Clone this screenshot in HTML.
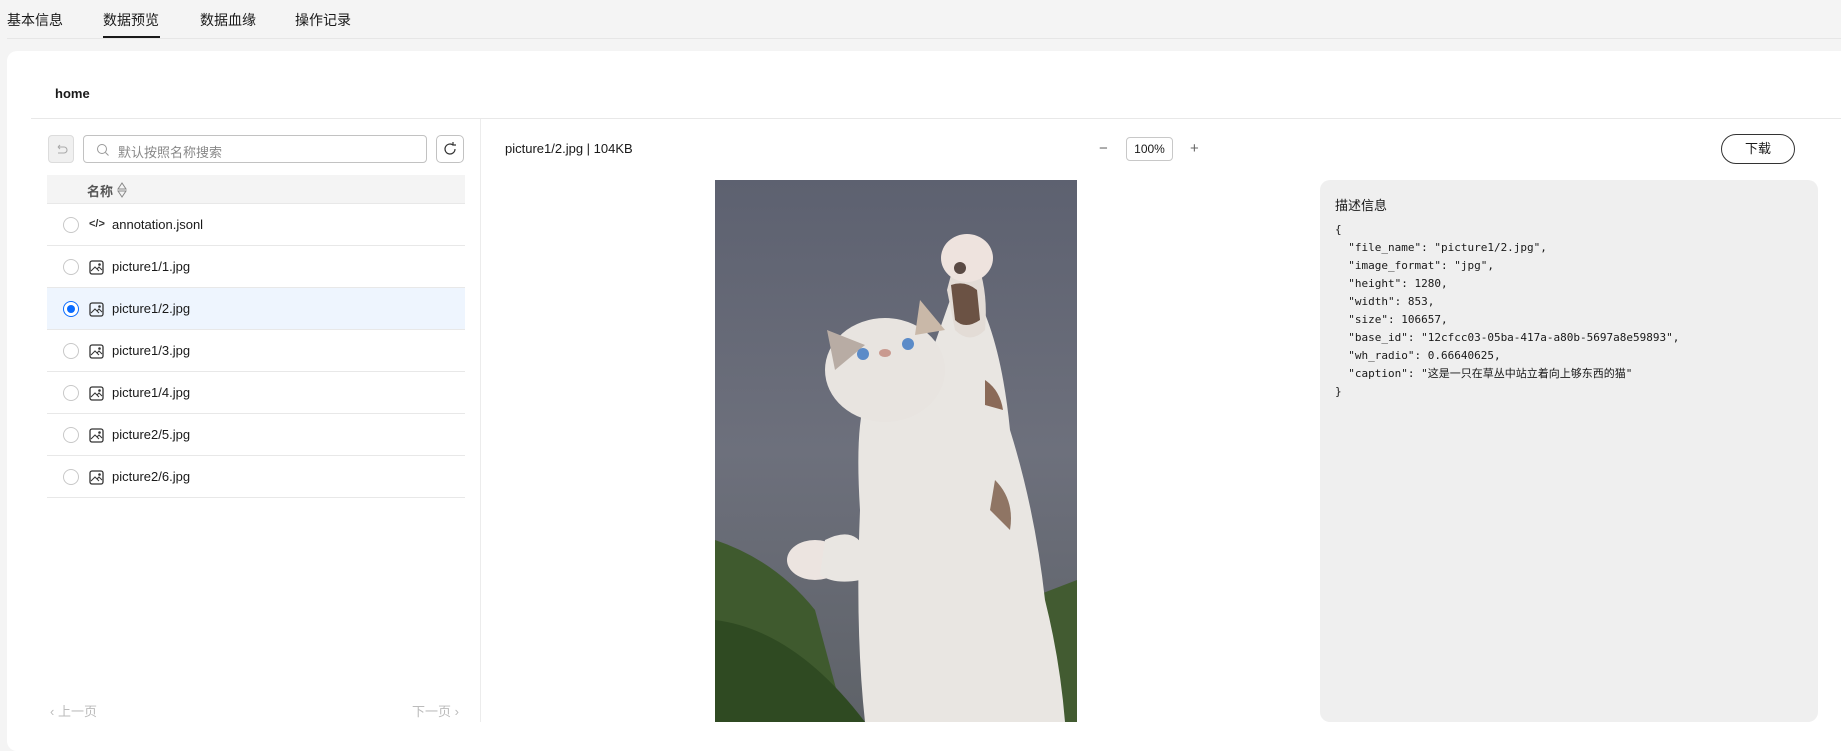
<!DOCTYPE html>
<html><head><meta charset="utf-8"><style>
*{margin:0;padding:0;box-sizing:border-box}
body{width:1841px;height:731px;background:#f4f4f4;font-family:"Liberation Sans","Noto Sans CJK SC",sans-serif;color:#191919;position:relative;overflow:hidden}
.a{position:absolute}
.tab{position:absolute;top:11px;font-size:14px;line-height:18px;color:#191919}
.card{position:absolute;left:7px;top:51px;width:1850px;height:700px;background:#fff;border-radius:10px}
.row{position:absolute;left:47px;width:418px;height:42px;border-bottom:1px solid #e8e8e8}
.radio{position:absolute;left:16px;top:13px;width:16px;height:16px;border:1px solid #c8c8c8;border-radius:50%;background:#fff}
.ic{position:absolute;left:42px;top:14px}
.fn{position:absolute;left:65px;top:13px;font-size:13px;line-height:16px;color:#191919}
pre{font-family:"DejaVu Sans Mono","Noto Sans CJK SC",monospace;font-size:11px;line-height:18px;color:#191919}
</style></head><body>
<div class="tab" style="left:7px">基本信息</div>
<div class="tab" style="left:103px">数据预览</div>
<div class="tab" style="left:200px">数据血缘</div>
<div class="tab" style="left:295px">操作记录</div>
<div class="a" style="left:7px;top:38px;width:1834px;height:1px;background:#e6e6e6"></div>
<div class="a" style="left:103px;top:36px;width:57px;height:2px;background:#191919"></div>
<div class="card"></div>
<div class="a" style="left:55px;top:86px;font-size:13px;font-weight:bold">home</div>
<div class="a" style="left:31px;top:118px;width:1810px;height:1px;background:#e8e8e8"></div>
<div class="a" style="left:480px;top:119px;width:1px;height:603px;background:#ececec"></div>
<div class="a" style="left:48px;top:135px;width:26px;height:28px;background:#f0f0f0;border:1px solid #dcdcdc;border-radius:4px"><svg width="26" height="28" viewBox="0 0 26 28"><path d="M9 11h6a3 3 0 0 1 0 6h-6M9 11l2-2M9 11l2 2" stroke="#aaa" fill="none" stroke-width="1.1"/></svg></div>
<div class="a" style="left:83px;top:135px;width:344px;height:28px;border:1px solid #c2c2c2;border-radius:4px"><svg class="a" style="left:12px;top:7px" width="14" height="14"><circle cx="6" cy="6" r="4.5" stroke="#999" fill="none"/><path d="M9.5 9.5l3 3" stroke="#999"/></svg><span class="a" style="left:34px;top:6px;font-size:13px;color:#888">默认按照名称搜索</span></div>
<div class="a" style="left:436px;top:135px;width:28px;height:28px;border:1px solid #c2c2c2;border-radius:5px"><svg width="26" height="26"><path d="M18 13a5 5 0 1 1-2-4" stroke="#333" fill="none" stroke-width="1.2"/><path d="M16 6v3h3" stroke="#333" fill="none" stroke-width="1.2"/></svg></div>
<div class="a" style="left:47px;top:175px;width:418px;height:29px;background:#f4f4f4;border-bottom:1px solid #e8e8e8"><span class="a" style="left:40px;top:6px;font-size:13px;color:#555;font-weight:bold">名称</span><svg class="a" style="left:69px;top:7px" width="12" height="16"><path d="M6 1l4 6H2zM6 15l4-6H2z" fill="none" stroke="#888"/></svg></div>
<div class="row" style="top:204px"><div class="radio"></div><span class="ic" style="font-size:11px;font-weight:bold;top:14px;color:#333">&lt;/&gt;</span><span class="fn">annotation.jsonl</span></div>
<div class="row" style="top:246px"><div class="radio"></div><svg class="ic" width="15" height="15"><rect x="1" y="1" width="13" height="13" rx="2" fill="none" stroke="#333" stroke-width="1.3"/><path d="M2 11l4-4 4 4M8 9l2-2 3 3" fill="none" stroke="#333"/><circle cx="10.5" cy="4.5" r="1.3" fill="#333"/></svg><span class="fn">picture1/1.jpg</span></div>
<div class="row" style="top:288px;background:#eef5fe"><div class="radio" style="border:1px solid #0a6cff"><div class="a" style="left:3px;top:3px;width:8px;height:8px;border-radius:50%;background:#0a6cff"></div></div><svg class="ic" width="15" height="15"><rect x="1" y="1" width="13" height="13" rx="2" fill="none" stroke="#333" stroke-width="1.3"/><path d="M2 11l4-4 4 4M8 9l2-2 3 3" fill="none" stroke="#333"/><circle cx="10.5" cy="4.5" r="1.3" fill="#333"/></svg><span class="fn">picture1/2.jpg</span></div>
<div class="row" style="top:330px"><div class="radio"></div><svg class="ic" width="15" height="15"><rect x="1" y="1" width="13" height="13" rx="2" fill="none" stroke="#333" stroke-width="1.3"/><path d="M2 11l4-4 4 4M8 9l2-2 3 3" fill="none" stroke="#333"/><circle cx="10.5" cy="4.5" r="1.3" fill="#333"/></svg><span class="fn">picture1/3.jpg</span></div>
<div class="row" style="top:372px"><div class="radio"></div><svg class="ic" width="15" height="15"><rect x="1" y="1" width="13" height="13" rx="2" fill="none" stroke="#333" stroke-width="1.3"/><path d="M2 11l4-4 4 4M8 9l2-2 3 3" fill="none" stroke="#333"/><circle cx="10.5" cy="4.5" r="1.3" fill="#333"/></svg><span class="fn">picture1/4.jpg</span></div>
<div class="row" style="top:414px"><div class="radio"></div><svg class="ic" width="15" height="15"><rect x="1" y="1" width="13" height="13" rx="2" fill="none" stroke="#333" stroke-width="1.3"/><path d="M2 11l4-4 4 4M8 9l2-2 3 3" fill="none" stroke="#333"/><circle cx="10.5" cy="4.5" r="1.3" fill="#333"/></svg><span class="fn">picture2/5.jpg</span></div>
<div class="row" style="top:456px"><div class="radio"></div><svg class="ic" width="15" height="15"><rect x="1" y="1" width="13" height="13" rx="2" fill="none" stroke="#333" stroke-width="1.3"/><path d="M2 11l4-4 4 4M8 9l2-2 3 3" fill="none" stroke="#333"/><circle cx="10.5" cy="4.5" r="1.3" fill="#333"/></svg><span class="fn">picture2/6.jpg</span></div>
<div class="a" style="left:50px;top:701px;font-size:13px;color:#bbb">‹ 上一页</div>
<div class="a" style="left:412px;top:701px;font-size:13px;color:#bbb">下一页 ›</div>
<div class="a" style="left:505px;top:141px;font-size:13px">picture1/2.jpg | 104KB</div>
<div class="a" style="left:1099px;top:140px;font-size:15px;color:#666">−</div>
<div class="a" style="left:1126px;top:137px;width:47px;height:24px;border:1px solid #c8c8c8;border-radius:4px;font-size:12px;text-align:center;line-height:22px">100%</div>
<div class="a" style="left:1190px;top:140px;font-size:15px;color:#666">+</div>
<div class="a" style="left:1721px;top:134px;width:74px;height:30px;border:1px solid #333;border-radius:15px;font-size:13px;text-align:center;line-height:28px">下载</div>
<svg class="a" style="left:715px;top:180px" width="362" height="542" viewBox="0 0 362 542">
<defs><linearGradient id="bg" x1="0" y1="0" x2="0" y2="1"><stop offset="0" stop-color="#5d6170"/><stop offset=".5" stop-color="#6d707c"/><stop offset="1" stop-color="#5e6268"/></linearGradient></defs>
<rect width="362" height="542" fill="url(#bg)"/>
<path d="M0 360 Q60 380 100 430 L130 542 H0Z" fill="#3f5a2e"/>
<path d="M0 440 Q80 450 150 542 H0Z" fill="#2f4a22"/>
<path d="M310 420 L362 400 V542 H330Z" fill="#425b31"/>
<path d="M145 330 Q140 250 150 220 Q170 200 200 220 L235 120 Q240 100 255 105 Q285 150 295 250 Q320 330 330 420 Q345 480 350 542 H150 Q140 450 145 330Z" fill="#e9e6e2"/>
<ellipse cx="170" cy="190" rx="60" ry="52" fill="#e8e4e0"/>
<path d="M112 150 L120 190 L150 165Z" fill="#b8aca4"/>
<path d="M205 120 L230 150 L200 155Z" fill="#c9b8a8"/>
<path d="M232 110 Q245 60 250 60 Q275 95 270 150 Q255 165 240 150Z" fill="#e3dcd6"/>
<path d="M236 105 Q250 100 262 110 L265 140 Q250 150 240 140Z" fill="#6b5244"/>
<path d="M270 200 Q285 210 288 230 L270 225Z" fill="#8a6a58"/>
<ellipse cx="252" cy="78" rx="26" ry="24" fill="#eee3de"/>
<ellipse cx="245" cy="88" rx="6" ry="6" fill="#5a4a44"/>
<ellipse cx="100" cy="380" rx="28" ry="20" fill="#ece4e0"/>
<path d="M110 360 Q140 345 150 370 L145 400 Q120 405 105 395Z" fill="#e9e6e2"/>
<circle cx="148" cy="174" r="6" fill="#5b8bc8"/><circle cx="193" cy="164" r="6" fill="#5b8bc8"/>
<ellipse cx="170" cy="173" rx="6" ry="4" fill="#c99a90"/>
<path d="M280 300 Q300 320 295 350 L275 330Z" fill="#8f7564"/>
</svg>
<div class="a" style="left:1320px;top:180px;width:498px;height:542px;background:#efefef;border-radius:10px"></div>
<div class="a" style="left:1335px;top:195px;font-size:13px">描述信息</div>
<pre class="a" style="left:1335px;top:221px">{
  "file_name": "picture1/2.jpg",
  "image_format": "jpg",
  "height": 1280,
  "width": 853,
  "size": 106657,
  "base_id": "12cfcc03-05ba-417a-a80b-5697a8e59893",
  "wh_radio": 0.66640625,
  "caption": "这是一只在草丛中站立着向上够东西的猫"
}</pre>
</body></html>
